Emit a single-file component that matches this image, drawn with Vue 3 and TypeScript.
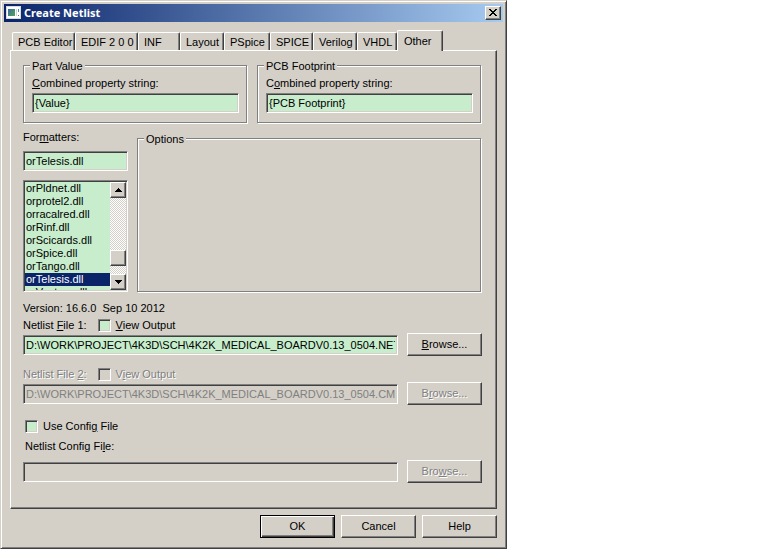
<script setup lang="ts">
import { ref } from 'vue'

const tabs: string[] = ['PCB Editor', 'EDIF 2 0 0', 'INF', 'Layout', 'PSpice', 'SPICE', 'Verilog', 'VHDL', 'Other']
const activeTab = ref('Other')

const formatters: string[] = [
  'orPldnet.dll',
  'orprotel2.dll',
  'orracalred.dll',
  'orRinf.dll',
  'orScicards.dll',
  'orSpice.dll',
  'orTango.dll',
  'orTelesis.dll',
  'orVectron.dll',
]
const formatter = ref('orTelesis.dll')

const partValue = ref('{Value}')
const footprint = ref('{PCB Footprint}')
const netlist1 = ref('D:\\WORK\\PROJECT\\4K3D\\SCH\\4K2K_MEDICAL_BOARDV0.13_0504.NET')
const netlist2 = ref('D:\\WORK\\PROJECT\\4K3D\\SCH\\4K2K_MEDICAL_BOARDV0.13_0504.CMP')
const configFile = ref('')
const view1 = ref(false)
const view2 = ref(false)
const useConfig = ref(false)
</script>

<template>
  <main class="dialog">
    <header class="titlebar">
      <svg class="app-icon" width="16" height="14" viewBox="0 0 16 14" aria-hidden="true">
        <defs>
          <linearGradient id="pic" x1="0" y1="0" x2="1" y2="1">
            <stop offset="0" stop-color="#3c6c9c" />
            <stop offset="1" stop-color="#4fa45c" />
          </linearGradient>
        </defs>
        <rect x="0" y="0" width="15" height="13" fill="#d8dcdc" />
        <rect x="1" y="1" width="13" height="11" fill="#fff" />
        <rect x="2" y="3" width="7" height="7" fill="url(#pic)" />
        <rect x="10" y="3" width="1" height="7" fill="#c9d6dc" />
        <rect x="12" y="3" width="1" height="3" fill="#4f86c4" />
        <rect x="12" y="9" width="1" height="1" fill="#667" />
      </svg>
      <h1>Create Netlist</h1>
      <button class="close" type="button" aria-label="Close">
        <svg width="8" height="7" viewBox="0 0 8 7" shape-rendering="crispEdges" aria-hidden="true">
          <path d="M0 0h2v1h1v1h2v-1h1v-1h2v1h-1v1h-1v1h-1v1h1v1h1v1h1v1h-2v-1h-1v-1h-2v1h-1v1h-2v-1h1v-1h1v-1h1v-1h-1v-1h-1v-1h-1z" />
        </svg>
      </button>
    </header>

    <nav class="tabs" role="tablist">
      <button
        v-for="tab in tabs"
        :key="tab"
        type="button"
        role="tab"
        class="tab"
        :class="{ active: tab === activeTab }"
        :aria-selected="tab === activeTab"
        @click="activeTab = tab"
      >{{ tab }}</button>
    </nav>

    <section class="panel">
      <div class="groups">
        <fieldset class="group">
          <legend>Part Value</legend>
          <label class="stacked" for="part-value"><span><u>C</u>ombined property string:</span></label>
          <input id="part-value" v-model="partValue" class="field" type="text" />
        </fieldset>
        <fieldset class="group">
          <legend>PCB Footprint</legend>
          <label class="stacked" for="footprint"><span>C<u>o</u>mbined property string:</span></label>
          <input id="footprint" v-model="footprint" class="field" type="text" />
        </fieldset>
      </div>

      <div class="middle">
        <div class="formatters">
          <label for="formatter"><span>For<u>m</u>atters:</span></label>
          <input id="formatter" v-model="formatter" class="field" type="text" />
          <div class="listbox">
            <select v-model="formatter" size="9" aria-label="Formatters">
              <option v-for="name in formatters" :key="name" :value="name">{{ name }}</option>
            </select>
            <div class="scrollbar">
              <button type="button" class="arrow" aria-label="Scroll up">
                <svg width="7" height="4" viewBox="0 0 7 4" shape-rendering="crispEdges"><path d="M3 0h1v1h1v1h1v1h1v1h-7v-1h1v-1h1v-1h1z" /></svg>
              </button>
              <span class="track-above"></span>
              <span class="thumb"></span>
              <span class="track-below"></span>
              <button type="button" class="arrow" aria-label="Scroll down">
                <svg width="7" height="4" viewBox="0 0 7 4" shape-rendering="crispEdges"><path d="M0 0h7v1h-1v1h-1v1h-1v1h-1v-1h-1v-1h-1v-1h-1z" /></svg>
              </button>
            </div>
          </div>
        </div>
        <fieldset class="group options">
          <legend>Options</legend>
        </fieldset>
      </div>

      <p class="version">Version: 16.6.0&nbsp; Sep 10 2012</p>

      <div class="file">
        <div class="file-head">
          <label for="netlist1">Netlist <u>F</u>ile 1:</label>
          <label class="check"><input v-model="view1" type="checkbox" /><span><u>V</u>iew Output</span></label>
        </div>
        <div class="file-row">
          <input id="netlist1" v-model="netlist1" class="field" type="text" />
          <button type="button" class="push"><span><u>B</u>rowse...</span></button>
        </div>
      </div>

      <div class="file disabled">
        <div class="file-head">
          <label for="netlist2">Netlist File <u>2</u>:</label>
          <label class="check"><input v-model="view2" type="checkbox" disabled /><span>V<u>i</u>ew Output</span></label>
        </div>
        <div class="file-row">
          <input id="netlist2" v-model="netlist2" class="field" type="text" disabled />
          <button type="button" class="push" disabled><span>B<u>r</u>owse...</span></button>
        </div>
      </div>

      <div class="config">
        <label class="check"><input v-model="useConfig" type="checkbox" /><span>Use Confi<u>g</u> File</span></label>
        <label class="config-label" for="config">Netlist Config Fi<u>l</u>e:</label>
        <div class="file-row">
          <input id="config" v-model="configFile" class="field" type="text" disabled />
          <button type="button" class="push" disabled><span>Bro<u>w</u>se...</span></button>
        </div>
      </div>
    </section>

    <footer class="actions">
      <button type="submit" class="push default">OK</button>
      <button type="button" class="push">Cancel</button>
      <button type="button" class="push">Help</button>
    </footer>
  </main>
</template>

<style>
body {
  margin: 0;
  background: #fff;
}
</style>

<style scoped>
* {
  box-sizing: border-box;
}

.dialog {
  width: 100%;
  max-width: 507px;
  padding: 3px 3px 10px;
  border: 1px solid;
  border-color: #d4d0c8 #404040 #404040 #d4d0c8;
  box-shadow: inset 1px 1px #fff, inset -1px -1px #808080;
  background: #d4d0c8;
  color: #000;
  font: 11px/13px "Liberation Sans", Arial, sans-serif;
}

button,
input,
select {
  margin: 0;
  font: inherit;
  color: inherit;
}

u {
  text-underline-offset: 1px;
  text-decoration-thickness: 1px;
}

.titlebar {
  display: flex;
  align-items: center;
  height: 18px;
  padding: 0 2px;
  background: linear-gradient(90deg, #0a246a, #a6caf0);
}

.app-icon {
  flex: none;
}

h1 {
  flex: 1;
  margin: 0 0 0 2px;
  color: #fff;
  font: bold 11px/18px "Noto Sans", "Open Sans", sans-serif;
}

.close,
.arrow,
.thumb,
.push {
  border: 1px solid;
  border-color: #fff #404040 #404040 #fff;
  box-shadow: inset -1px -1px #808080;
  background: #d4d0c8;
}

.close {
  display: flex;
  align-items: center;
  justify-content: center;
  width: 16px;
  height: 14px;
  padding: 0 1px 1px 0;
}

.tabs {
  display: grid;
  grid-template-columns: 63px 63px 42px 44px 46px 43px 44px 40px 46px;
  align-items: end;
  height: 20px;
  margin: 8px 6px 0 8px;
}

.tab {
  height: 18px;
  padding: 1px 0 0 5px;
  border: 1px solid;
  border-color: #fff #404040 transparent #fff;
  border-bottom: 0;
  border-radius: 2px 2px 0 0;
  box-shadow: inset -1px 0 #808080;
  background: #d4d0c8;
  text-align: left;
  white-space: nowrap;
}

.tab.active {
  z-index: 1;
  height: 21px;
  margin-bottom: -1px;
  padding: 0 0 0 6px;
}

.panel {
  margin: 0 6px;
  padding: 9px 14px 25px 12px;
  border: 1px solid;
  border-color: #fff #404040 #404040 #fff;
  box-shadow: inset -1px -1px #808080;
}

.groups {
  display: grid;
  grid-template-columns: 1fr 1fr;
  gap: 10px;
  margin: 5px 1px 0 0;
}

.group {
  min-width: 0;
  margin: 0;
  padding: 0 7px 9px 8px;
  border: 1px solid #808080;
  box-shadow: 1px 1px #fff, inset 1px 1px #fff;
}

.group legend {
  float: left;
  margin: -6px 0 0 -2px;
  padding: 0 2px;
  background: #d4d0c8;
}

.stacked {
  display: block;
  clear: both;
  padding: 4px 0 3px;
}

.field {
  display: block;
  width: 100%;
  min-width: 0;
  height: 20px;
  padding: 0 2px;
  border: 1px solid;
  border-color: #808080 #fff #fff #808080;
  border-radius: 0;
  box-shadow: inset 1px 1px #404040, inset -1px -1px #d4d0c8;
  background: #c7edcc;
  outline: 0;
}

.field:disabled {
  background: #d4d0c8;
  color: #808080;
}

.middle {
  display: grid;
  grid-template-columns: 105px 1fr;
  gap: 9px;
  margin: 8px 1px 0 0;
}

.formatters label {
  display: block;
  margin-bottom: 7px;
}

.listbox {
  display: flex;
  height: 112px;
  margin-top: 9px;
  padding: 1px;
  border: 1px solid;
  border-color: #808080 #fff #fff #808080;
  box-shadow: inset 1px 1px #404040, inset -1px -1px #d4d0c8;
}

.listbox select {
  flex: 1;
  min-width: 0;
  height: 108px;
  padding: 0;
  border: 0;
  border-radius: 0;
  outline: 0;
  background: #c7edcc;
  overflow: hidden;
  scrollbar-width: none;
}

.listbox option {
  height: 13px;
  min-height: 13px;
  padding: 0 1px;
  line-height: 13px;
}

.listbox option:checked {
  background: linear-gradient(#0a246a, #0a246a);
  -webkit-text-fill-color: #fff;
}

.scrollbar {
  display: flex;
  flex-direction: column;
  width: 16px;
  background: repeating-conic-gradient(#fff 0 25%, #d4d0c8 0 50%) 0 0 / 2px 2px;
}

.arrow,
.thumb {
  flex: none;
  height: 16px;
  padding: 0;
}

.arrow {
  display: flex;
  align-items: center;
  justify-content: center;
}

.track-above {
  flex: 13;
}

.track-below {
  flex: 2;
}

.options {
  margin-top: 7px;
}

.version {
  margin: 10px 0 3px;
}

.file-head {
  display: flex;
  align-items: center;
  gap: 11px;
  height: 15px;
}

.check {
  display: flex;
  align-items: center;
  gap: 5px;
}

.check input {
  appearance: none;
  width: 13px;
  height: 13px;
  border: 1px solid;
  border-color: #808080 #fff #fff #808080;
  box-shadow: inset 1px 1px #404040, inset -1px -1px #d4d0c8;
  background: #c7edcc;
}

.check input:disabled {
  background: #d4d0c8;
}

.file-row {
  display: grid;
  grid-template-columns: 1fr 75px;
  align-items: center;
  gap: 9px;
}

.push {
  height: 23px;
  padding: 0;
  text-align: center;
}

.push:disabled,
.disabled label {
  color: #808080;
  text-shadow: 1px 1px #fff;
}

.file.disabled {
  margin-top: 11px;
}

.config {
  margin-top: 15px;
}

.config .check,
.config-label {
  padding-left: 2px;
}

.config-label {
  display: block;
  margin: 7px 0;
}

.actions {
  display: flex;
  justify-content: flex-end;
  gap: 6px;
  margin: 6px 6px 0;
}

.actions .push {
  width: 75px;
}

.push.default {
  border-color: #000;
  box-shadow: inset 1px 1px #fff, inset -1px -1px #404040, inset -2px -2px #808080;
}
</style>
